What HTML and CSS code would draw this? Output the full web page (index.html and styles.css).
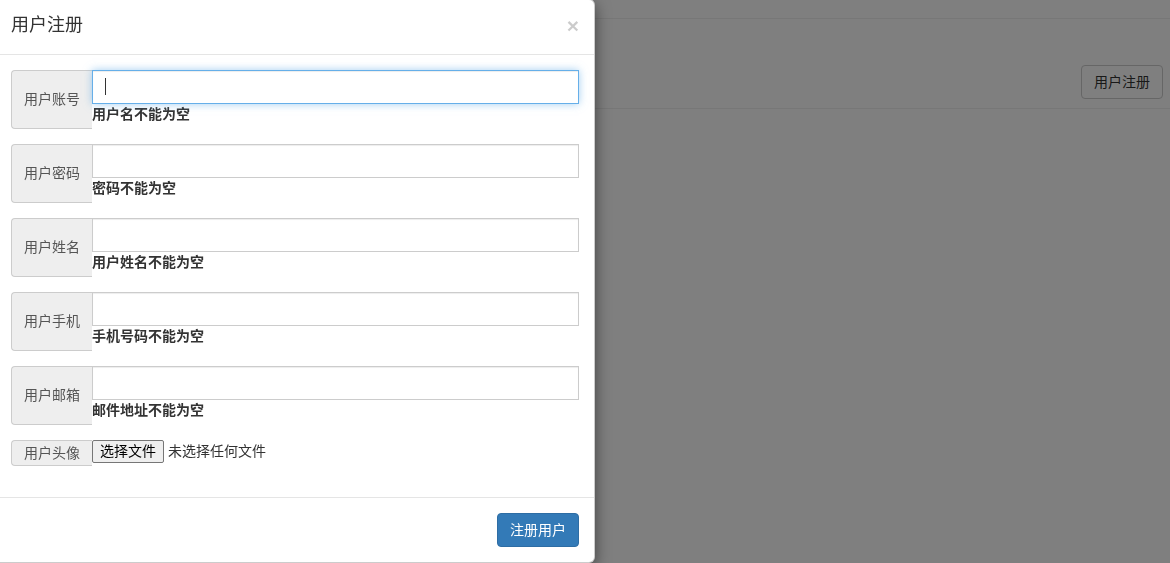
FILE: index.html
```html
<!DOCTYPE html>
<html lang="zh-CN">

<head>
    <meta charset="UTF-8">
    <meta name="viewport" content="width=device-width, initial-scale=1.0">
    <title>用户注册</title>
    <link rel="stylesheet" href="styles.css">
</head>

<body>
    <div class="page">
        <div class="topbar"></div>
        <div class="toolbar">
            <button class="btn btn-default">用户注册</button>
        </div>
    </div>
    <div class="backdrop"></div>
    <div class="modal">
        <div class="modal-header">
            <button class="close">&times;</button>
            <h4 class="modal-title">用户注册</h4>
        </div>
        <div class="modal-body">
            <div class="form-group">
                <span class="addon">用户账号</span>
                <div class="field">
                    <div class="control focus"><span class="caret"></span></div>
                    <label class="error">用户名不能为空</label>
                </div>
            </div>
            <div class="form-group">
                <span class="addon">用户密码</span>
                <div class="field">
                    <div class="control"></div>
                    <label class="error">密码不能为空</label>
                </div>
            </div>
            <div class="form-group">
                <span class="addon">用户姓名</span>
                <div class="field">
                    <div class="control"></div>
                    <label class="error">用户姓名不能为空</label>
                </div>
            </div>
            <div class="form-group">
                <span class="addon">用户手机</span>
                <div class="field">
                    <div class="control"></div>
                    <label class="error">手机号码不能为空</label>
                </div>
            </div>
            <div class="form-group">
                <span class="addon">用户邮箱</span>
                <div class="field">
                    <div class="control"></div>
                    <label class="error">邮件地址不能为空</label>
                </div>
            </div>
            <div class="form-group file-group">
                <span class="addon small">用户头像</span>
                <div class="file">
                    <button class="file-btn">选择文件</button>
                    <span class="file-name">未选择任何文件</span>
                </div>
            </div>
        </div>
        <div class="modal-footer">
            <button class="btn btn-primary">注册用户</button>
        </div>
    </div>
</body>

</html>
```

FILE: styles.css
```css
* {
    box-sizing: border-box;
}
body {
    margin: 0;
    font-family: "Liberation Sans", "Noto Sans CJK SC", sans-serif;
    font-size: 14px;
    line-height: 20px;
    color: #333;
    background-color: #fff;
    overflow: hidden;
}

.topbar {
    height: 19px;
    border-bottom: 1px solid #eee;
}
.toolbar {
    display: flex;
    justify-content: flex-end;
    padding: 46px 7px 9px;
    border-bottom: 1px solid #eee;
}
.btn {
    font-family: inherit;
    font-size: 14px;
    line-height: 20px;
    padding: 6px 12px;
    border-radius: 4px;
    border: 1px solid transparent;
    cursor: pointer;
}
.btn-default {
    background-color: #fff;
    border-color: #ccc;
    color: #333;
}
.btn-primary {
    background-color: #337ab7;
    border-color: #2e6da4;
    color: #fff;
}

.backdrop {
    position: fixed;
    inset: 0;
    background-color: rgba(0, 0, 0, .5);
}

.modal {
    position: absolute;
    top: -1px;
    left: -5px;
    width: 600px;
    background-color: #fff;
    border: 1px solid rgba(0, 0, 0, .2);
    border-radius: 6px;
    box-shadow: 0 5px 15px rgba(0, 0, 0, .5);
}
.modal-header {
    display: flex;
    flex-direction: row-reverse;
    justify-content: space-between;
    align-items: flex-start;
    padding: 13px 15px 15px;
    border-bottom: 1px solid #e5e5e5;
}
.modal-title {
    margin: 0;
    font-size: 18px;
    font-weight: normal;
    line-height: 25.7px;
}
.close {
    margin-top: 2px;
    padding: 0;
    border: 0;
    background: none;
    font-family: inherit;
    font-size: 21px;
    font-weight: bold;
    line-height: 21px;
    color: #000;
    opacity: .2;
}

.modal-body {
    padding: 15px;
}
.form-group {
    display: flex;
    margin-bottom: 15px;
}
.addon {
    display: flex;
    align-items: center;
    padding: 6px 12px;
    color: #555;
    background-color: #eee;
    border: 1px solid #ccc;
    border-right: 0;
    border-radius: 4px 0 0 4px;
    white-space: nowrap;
}
.addon.small {
    padding: 2px 12px;
}
.field {
    flex: 1;
}
.control {
    position: relative;
    height: 34px;
    border: 1px solid #ccc;
    background-color: #fff;
    box-shadow: inset 0 1px 1px rgba(0, 0, 0, .075);
}
.control.focus {
    border-color: #66afe9;
    box-shadow: inset 0 1px 1px rgba(0, 0, 0, .075), 0 0 8px rgba(102, 175, 233, .6);
}
.caret {
    position: absolute;
    left: 12px;
    top: 7px;
    width: 1px;
    height: 17px;
    background-color: #333;
}
.error {
    display: block;
    margin-bottom: 5px;
    font-weight: bold;
    color: #333;
}

.file-group {
    margin-top: 1px;
    margin-bottom: 16px;
}
.file {
    display: flex;
    align-items: flex-start;
    gap: 4px;
}
.file-btn {
    height: 23px;
    padding: 0 7px;
    font-family: inherit;
    font-size: 14px;
    line-height: 20px;
    color: #000;
    background-color: #efefef;
    border: 1px solid #767676;
    border-radius: 2px;
}
.file-name {
    line-height: 23px;
    color: #333;
}

.modal-footer {
    display: flex;
    justify-content: flex-end;
    padding: 15px;
    border-top: 1px solid #e5e5e5;
}
```
